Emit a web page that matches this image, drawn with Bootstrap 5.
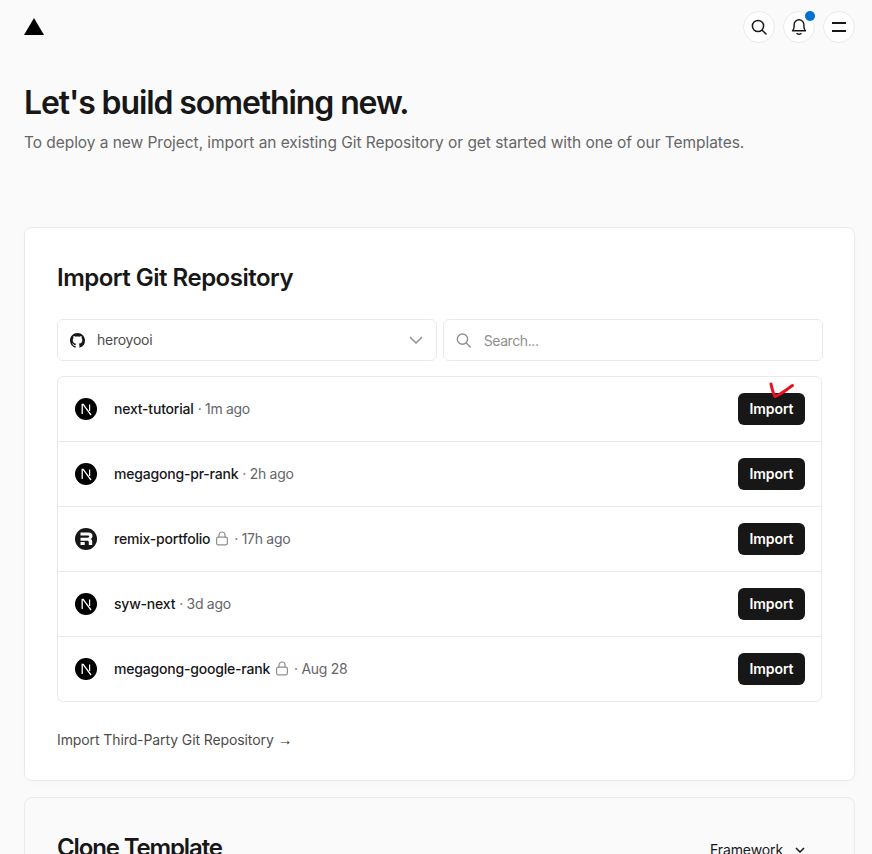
<!DOCTYPE html>
<html lang="en">
<head>
  <meta charset="UTF-8" />
  <meta name="viewport" content="width=device-width, initial-scale=1.0"/>
  <title>Let's build something new</title>
  <link href="https://cdn.jsdelivr.net/npm/bootstrap@5.3.2/dist/css/bootstrap.min.css" rel="stylesheet">
  <style>
    html, body { height: 100vh; overflow: hidden; }
    body {
      background: #fafafa;
      font-family: Inter, "Liberation Sans", sans-serif;
      color: #171717;
      font-size: 14px;
    }
    .top-bar { height: 54px; padding: 11px 17px 11px 24px; }
    .logo-tri { width: 20px; height: 17px; margin-top: 7px; }
    .round-btn {
      width: 32px; height: 32px; padding: 0;
      background: #fff;
      border: 1px solid #eaeaea;
      border-radius: 50%;
    }
    .round-btn:hover { background: #fff; border-color: #eaeaea; }
    .notify-dot {
      width: 10px; height: 10px;
      background: #0070d8;
      border-radius: 50%;
      top: -1px; right: -1px;
    }
    .hero { padding: 27px 24px 0; height: 173px; }
    .hero-title { font-size: 32px; font-weight: 600; letter-spacing: -1.1px; line-height: 44px; margin: 0 0 6px; }
    .hero-sub { font-size: 15.5px; letter-spacing: -.05px; color: #666; line-height: 23px; margin: 0; }
    .panel {
      margin: 0 17px 16px 24px;
      background: #fff;
      border: 1px solid #eaeaea;
      border-radius: 8px;
      padding: 32px 32px 28px;
      box-shadow: 0 2px 8px rgba(0,0,0,.02);
    }
    .panel-muted { background: #fafafa; box-shadow: none; padding-top: 32px; }
    .panel-title { font-size: 24px; font-weight: 600; letter-spacing: -0.5px; line-height: 36px; margin: 0 0 23px; }
    .panel-muted .panel-title { letter-spacing: -1.14px; }
    .field-row { gap: 6px; margin-bottom: 15px; margin-right: -1px; }
    .field-box {
      flex: 1 1 0;
      height: 42px;
      border: 1px solid #eaeaea;
      border-radius: 6px;
      padding: 0 12px;
      background: #fff;
      font-size: 14px;
    }
    .field-box input {
      border: 0; outline: 0; padding: 0; width: 100%;
      font-size: 14px; letter-spacing: -.4px; color: #171717; background: transparent;
    }
    .field-box input::placeholder { color: #8f8f8f; opacity: 1; }
    .owner-name { color: #4d4d4d; letter-spacing: -.25px; margin-left: 12px; padding-bottom: 1px; }
    .owner-caret { margin-right: 1px; }
    .repo-list { border: 1px solid #eaeaea; border-radius: 6px; --bs-list-group-border-color: #eaeaea; }
    .repo-row {
      height: 65px;
      padding: 0 16px 0 17px;
      border-left: 0; border-right: 0;
      background: transparent;
    }
    .repo-row:first-child { border-top: 0; }
    .repo-row:last-child { border-bottom: 0; height: 64px; }
    .repo-logo { margin-right: 17px; flex: none; }
    .repo-name { font-weight: 500; color: #171717; letter-spacing: -.2px; padding-bottom: 2px; }
    .repo-age { color: #666; letter-spacing: -.3px; padding-bottom: 2px; }
    .lock-ic { margin: 0 5px 0 1px; position: relative; top: -1px; }
    .import-btn {
      width: 67px; height: 32px; padding: 0 0 2px;
      background: #171717; border: 0; border-radius: 6px;
      color: #fff; font-size: 14px; font-weight: 600; letter-spacing: -.1px;
    }
    .import-btn:hover { background: #171717; color: #fff; }
    .check-mark { top: -11px; left: 30px; width: 27px; height: 17px; }
    .third-party { display: block; margin-top: 28px; color: #4d4d4d; letter-spacing: -.1px; text-decoration: none; line-height: 20px; padding-bottom: 2px; }
    .third-arrow { font-family: "Liberation Sans", sans-serif; font-size: 15px; color: #333; }
    .framework-btn { color: #171717; font-size: 14px; letter-spacing: -.1px; padding: 9px 17px 0 0; }
  </style>
</head>
<body>

  <!-- TOP BAR -->
  <header class="top-bar d-flex justify-content-between align-items-start">
    <svg class="logo-tri" viewBox="0 0 20 17"><polygon points="10,0 20,17 0,17" fill="#000"/></svg>
    <div class="d-flex gap-2">
      <button class="btn round-btn d-flex align-items-center justify-content-center" aria-label="Search">
        <svg width="18" height="18" viewBox="0 0 18 18" fill="none" stroke="#171717" stroke-width="1.5" stroke-linecap="round"><circle cx="8" cy="8" r="5.6"/><path d="M12.2 12.2 16 16"/></svg>
      </button>
      <button class="btn round-btn d-flex align-items-center justify-content-center position-relative" aria-label="Notifications">
        <svg width="16" height="18" viewBox="0 0 16 18" fill="none" stroke="#171717" stroke-width="1.4" stroke-linecap="round" stroke-linejoin="round"><path d="M1.500 12.800c1-1 1.600-1.900 1.600-4.300V6.600a4.900 4.900 0 0 1 9.800 0v1.900c0 2.400.6 3.300 1.600 4.300Z"/><path d="M6 15.600c1.200.8 2.800.8 4 0"/></svg>
        <span class="notify-dot position-absolute"></span>
      </button>
      <button class="btn round-btn d-flex flex-column align-items-center justify-content-center" aria-label="Menu">
        <svg width="16" height="10" viewBox="0 0 16 10" stroke="#171717" stroke-width="2"><path d="M1 1h14M1 9h14"/></svg>
      </button>
    </div>
  </header>

  <!-- HERO -->
  <section class="hero">
    <h1 class="hero-title">Let's build something new.</h1>
    <p class="hero-sub">To deploy a new Project, import an existing Git Repository or get started with one of our Templates.</p>
  </section>

  <!-- IMPORT PANEL -->
  <section class="panel">
    <h2 class="panel-title">Import Git Repository</h2>
    <div class="d-flex field-row">
      <div class="field-box d-flex align-items-center">
        <svg width="15" height="15" viewBox="0 0 16 16" fill="#171717"><path d="M8 0C3.580 0 0 3.580 0 8c0 3.540 2.290 6.530 5.470 7.590.4.070.55-.17.55-.38 0-.19-.01-.82-.01-1.490-2.010.37-2.530-.49-2.690-.94-.09-.23-.48-.94-.82-1.130-.28-.15-.68-.52-.01-.53.63-.01 1.080.58 1.230.82.72 1.210 1.870.87 2.330.66.07-.52.28-.87.51-1.070-1.780-.2-3.640-.89-3.640-3.950 0-.87.31-1.590.82-2.150-.08-.2-.36-1.020.08-2.120 0 0 .67-.21 2.200.82.64-.18 1.320-.27 2-.27s1.360.09 2 .27c1.530-1.040 2.200-.82 2.200-.82.44 1.100.16 1.920.08 2.120.51.56.82 1.270.82 2.150 0 3.070-1.870 3.750-3.650 3.950.29.25.54.73.54 1.480 0 1.070-.01 1.930-.01 2.200 0 .21.15.46.55.38A8.010 8.010 0 0 0 16 8c0-4.420-3.580-8-8-8Z"/></svg>
        <span class="owner-name">heroyooi</span>
        <svg class="ms-auto owner-caret" width="14" height="8" viewBox="0 0 14 8" fill="none" stroke="#8f8f8f" stroke-width="1.5"><path d="m1 1 6 6 6-6"/></svg>
      </div>
      <div class="field-box d-flex align-items-center">
        <svg class="me-2" width="17" height="17" viewBox="0 0 17 17" fill="none" stroke="#8f8f8f" stroke-width="1.5" stroke-linecap="round"><circle cx="7" cy="7" r="5.6"/><path d="m11.200 11.200 4.300 4.300"/></svg>
        <input class="ms-1" type="text" placeholder="Search...">
      </div>
    </div>

    <ul class="list-group repo-list" id="repoList"></ul>

    <a class="third-party" href="#">Import Third-Party Git Repository <span class="third-arrow">→</span></a>
  </section>

  <!-- CLONE PANEL -->
  <section class="panel panel-muted d-flex justify-content-between align-items-start">
    <h2 class="panel-title">Clone Template</h2>
    <div class="framework-btn d-flex align-items-center gap-2">
      Framework
      <svg class="ms-1" width="10" height="6" viewBox="0 0 10 6" fill="none" stroke="#171717" stroke-width="1.5"><path d="m1 1 4 4 4-4"/></svg>
    </div>
  </section>

  <script>
    const repos = [
      { name: 'next-tutorial', age: '1m ago', kind: 'next', lock: false, check: true },
      { name: 'megagong-pr-rank', age: '2h ago', kind: 'next', lock: false },
      { name: 'remix-portfolio', age: '17h ago', kind: 'remix', lock: true },
      { name: 'syw-next', age: '3d ago', kind: 'next', lock: false },
      { name: 'megagong-google-rank', age: 'Aug 28', kind: 'next', lock: true }
    ];
    const nextIcon = '<svg class="repo-logo" width="22" height="22" viewBox="0 0 22 22"><circle cx="11" cy="11" r="11" fill="#000"/><path d="M7.200 16V6.400h1L16 17" fill="none" stroke="#fff" stroke-width="1.300"/><path d="M14.600 6.400v6.500" stroke="#fff" stroke-width="1.200"/></svg>';
    const remixIcon = '<svg class="repo-logo" width="22" height="22" viewBox="0 0 22 22"><circle cx="11" cy="11" r="11" fill="#171717"/><path d="M5.500 4.600h8.300c2.400 0 3.700 1.400 3.700 3.400 0 1.600-.9 2.600-2.200 2.900 1.400.3 1.900 1.300 1.900 2.600v3.500h-3.400v-2.800c0-1-.5-1.500-1.500-1.500H5.500V9.700h7.300c.9 0 1.400-.4 1.400-1.100s-.5-1.100-1.400-1.100H5.500Z" fill="#fff"/><path d="M5.500 14h4.200v3H5.500Z" fill="#fff"/></svg>';
    const lockIcon = '<svg class="lock-ic" width="14" height="15" viewBox="0 0 14 15" fill="none" stroke="#8f8f8f" stroke-width="1.2"><rect x="1.600" y="6.200" width="10.800" height="7.600" rx="1.500"/><path d="M4 6.200V4a3 3 0 0 1 6 0v2.200"/></svg>';
    const checkMark = '<svg class="check-mark position-absolute" viewBox="0 0 27 17" fill="none" stroke="#e8131f" stroke-width="3" stroke-linecap="round" stroke-linejoin="round"><path d="M3 2c.8 4 2 9 4 12.500C12 13 18 8 24.500 3.500"/></svg>';

    document.getElementById('repoList').innerHTML = repos.map(r => `
      <li class="list-group-item repo-row d-flex align-items-center">
        ${r.kind === 'next' ? nextIcon : remixIcon}
        <span class="repo-name me-1">${r.name}</span>
        ${r.lock ? lockIcon : ''}
        <span class="repo-age">· ${r.age}</span>
        <span class="ms-auto position-relative">
          <button class="btn import-btn">Import</button>
          ${r.check ? checkMark : ''}
        </span>
      </li>`).join('');
  </script>
  <script src="https://cdn.jsdelivr.net/npm/bootstrap@5.3.2/dist/js/bootstrap.bundle.min.js"></script>
</body>
</html>
